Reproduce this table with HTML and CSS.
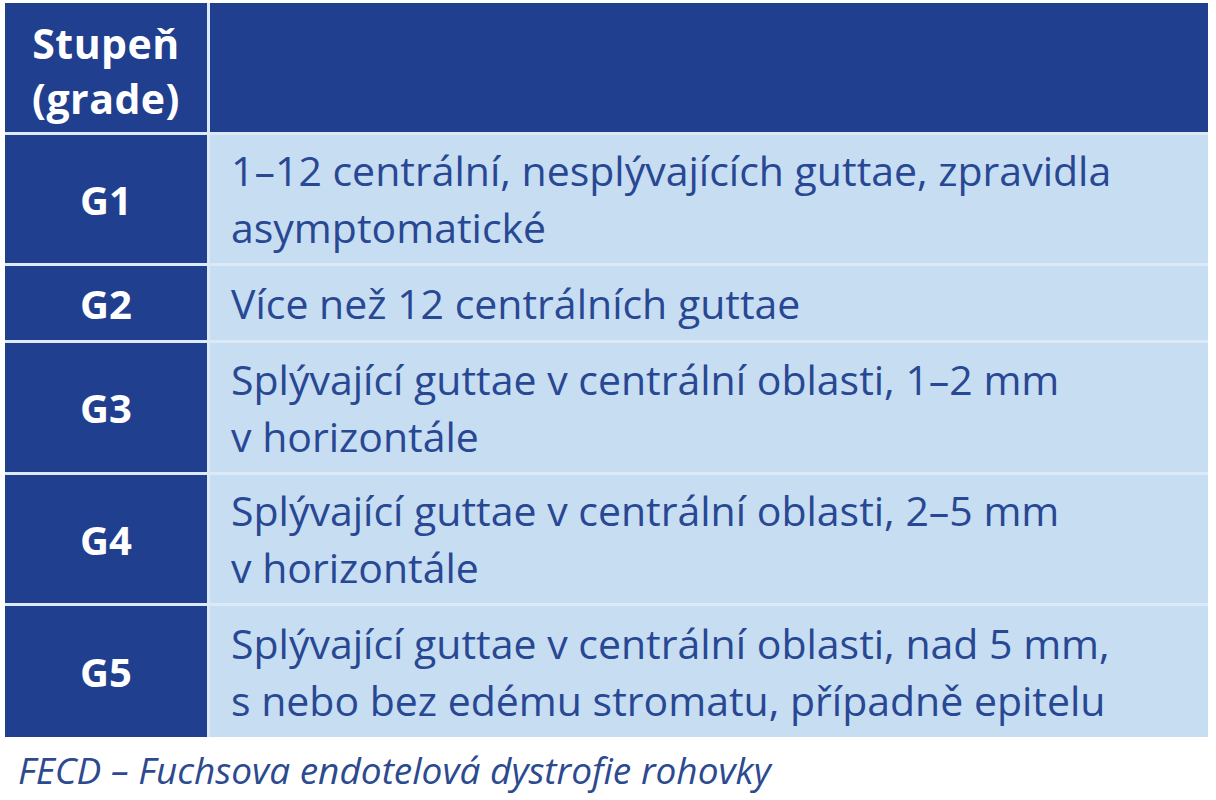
FILE: index.html
```html
<!DOCTYPE html>
<html lang="cs">
<head>
<meta charset="utf-8">
<link rel="stylesheet" href="styles.css">
</head>
<body>
<div class="wrap">
  <table class="grades">
    <tr class="head">
      <th class="g">Stupeň<br>(grade)</th>
      <th class="d"></th>
    </tr>
    <tr class="r1">
      <td class="g">G1</td>
      <td class="d">1–12 centrální, nesplývajících guttae, zpravidla<br>asymptomatické</td>
    </tr>
    <tr class="r2">
      <td class="g">G2</td>
      <td class="d">Více než 12 centrálních guttae</td>
    </tr>
    <tr class="r3">
      <td class="g">G3</td>
      <td class="d">Splývající guttae v centrální oblasti, 1–2 mm<br>v horizontále</td>
    </tr>
    <tr class="r4">
      <td class="g">G4</td>
      <td class="d">Splývající guttae v centrální oblasti, 2–5 mm<br>v horizontále</td>
    </tr>
    <tr class="r5">
      <td class="g">G5</td>
      <td class="d">Splývající guttae v centrální oblasti, nad 5 mm,<br>s nebo bez edému stromatu, případně epitelu</td>
    </tr>
  </table>
  <p class="caption">FECD – Fuchsova endotelová dystrofie rohovky</p>
</div>
</body>
</html>
```

FILE: styles.css
```css
html, body {
  margin: 0;
  padding: 0;
  background: #ffffff;
}
.wrap {
  padding: 3px 8px 0 5px;
  font-family: "Open Sans", "Noto Sans", sans-serif;
}
.grades {
  border-collapse: collapse;
  width: 1203px;
  table-layout: fixed;
}
.grades th, .grades td {
  padding: 0;
  border: 3px solid #dce9f7;
  vertical-align: middle;
}
.grades tr:first-child th { border-top: none; }
.grades tr:last-child td { border-bottom: none; }
.grades th:first-child, .grades td:first-child { border-left: none; }
.grades th:last-child, .grades td:last-child { border-right: none; }
.g {
  width: 202px;
  background: #213f8f;
  color: #ffffff;
  font-weight: 700;
  text-align: center;
  font-size: 40px;
  line-height: 55px;
}
.head .g {
  font-size: 41px;
  letter-spacing: 0.5px;
}
.head .d {
  background: #213f8f;
}
.head th {
  height: 123px;
  padding-top: 6px;
}
td.d {
  background: #c7ddf2;
  color: #284894;
  font-size: 41px;
  line-height: 57px;
  text-align: left;
  padding-left: 21px;
}
.r1 td { height: 128px; }
.r2 td { height: 74px; }
.r3 td { height: 129px; }
.r4 td { height: 128px; }
.r5 td { height: 131px; }
.caption {
  margin: 8px 0 0 13px;
  font-style: italic;
  color: #2c4a8f;
  font-size: 37px;
  line-height: 50px;
}
```
